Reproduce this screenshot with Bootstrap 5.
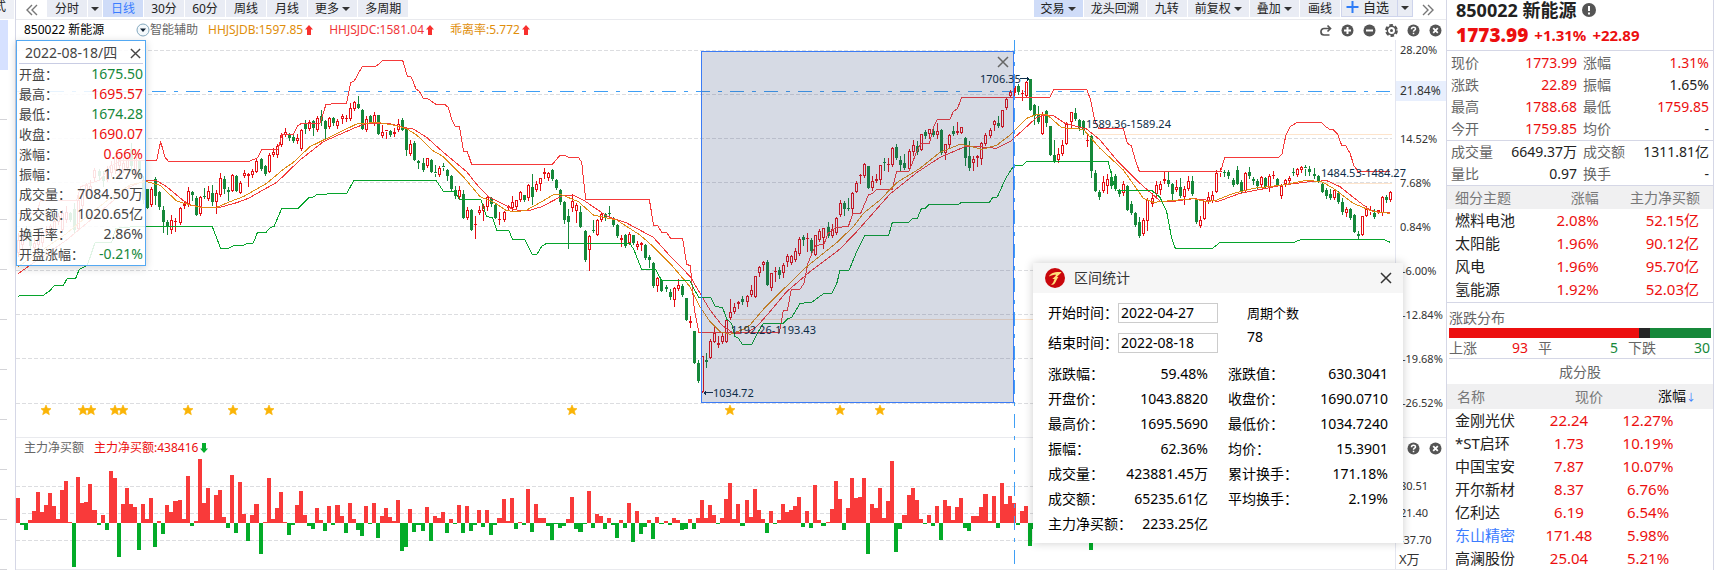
<!DOCTYPE html>
<html lang="zh-CN">
<head>
<meta charset="utf-8">
<meta name="viewport" content="width=device-width, initial-scale=1">
<title>850022 新能源</title>
<link rel="stylesheet" href="https://cdn.jsdelivr.net/npm/bootstrap@5.3.0/dist/css/bootstrap.min.css">
<style>
:root { --up:#ec0f0f; --down:#16883a; --line:#d5d7e6; --ink:#222; --dim:#666; --hot:#3b7cff; }
body { font-family:"Noto Sans","Noto Sans CJK SC",sans-serif; font-size:12px; line-height:20px; color:var(--ink); background:#fff; overflow:hidden; }
button { border:0; background:none; padding:0; color:inherit; }
svg { display:block; }
.up { color:var(--up); } .down { color:var(--down); } .dim { color:var(--dim); }
/* left strip */
.strip { width:16px; border-right:1px solid var(--line); }
.strip-tab { height:19px; line-height:14px; background:#eef0f6; width:14px; direction:rtl; padding-right:8px; }
.strip-on { width:8px; height:50px; margin-top:1px; background:#d6e1ff; }
.strip-tick { width:7px; height:50px; border-bottom:1px solid #d4d4d8; }
/* toolbar */
.tools { height:20px; border-bottom:1px solid #e9eaee; padding-left:10px; gap:1px; }
.tool { height:17px; min-width:40px; padding:0 7px; line-height:14px; background:#e9ecf4; }
.tool-on { background:#cfdcf8; }
.tool-caret { min-width:14px; padding:0 3px; }
.tool-add { border:1px solid #ced4ec; border-top:0; }
.caret { display:inline-block; border:4px solid transparent; border-top:4px solid #333; border-bottom:0; vertical-align:2px; }
.chev { width:12px; height:14px; fill:none; stroke:#777; stroke-width:1.4; }
/* charts */
.info { height:20px; padding-left:8px; }
.info-code { width:112px; }
.info-first { margin-left:10px; }
.info-item { margin-left:16px; }
.ico { width:13px; height:13px; }
.ico-set { gap:9px; }
.plot-main { height:397px; }
.plot-sub { height:111px; }
.axis { width:51px; border-left:1px solid #e4e6f0; font-size:11px; color:#333; }
.axis span { position:absolute; left:4px; transform:translateY(-50%); }
.axis .axis-neg { left:6px; }
.axis .axis-now { left:0; right:0; padding-left:4px; background:#e8effd; font-size:12px; }
.axis .axis-unit { left:3px; font-size:13px; }
.sub { border-top:1px solid #e9eaee; border-bottom:1px solid #e9eaee; }
.layer { position:absolute; top:20px; left:0; right:51px; bottom:0; pointer-events:none; }
.mark-text { position:absolute; font-size:11px; color:#0c2c48; transform:translateY(-50%); white-space:nowrap; }
.vline { position:absolute; top:0; bottom:4px; width:1px; background:repeating-linear-gradient(#3f9ff5 0 14px,transparent 14px 22px,#3f9ff5 22px 26px,transparent 26px 34px); }
.range { position:absolute; top:11px; height:352px; border:1px solid #3b7bf5; background:rgba(50,72,120,.2); }
/* day tooltip */
.tip { position:absolute; left:0; top:20px; width:130px; height:226px; padding:2px 2px 0; background:rgba(255,255,255,.88); border:1px solid #54a9f3; box-shadow:0 2px 8px rgba(0,0,0,.18); color:#444; font-size:14px; }
.tip-head { height:21px; padding:0 2px 0 6px; border-bottom:1px solid #c9cde4; }
.tip dt { font-weight:400; font-size:13px; } .tip dd { margin:0; }
/* statistics window */
.stat { position:absolute; right:43px; top:263px; width:370px; height:280px; background:#fff; box-shadow:0 0 9px rgba(0,0,0,.2); color:#000; font-size:14px; }
.stat-head { height:30px; background:#f6f6f6; padding:0 11px 0 12px; gap:9px; color:#333; }
.stat-form { padding:10px 15px 0; gap:0 29px; height:68px; }
.stat-form input { width:100px; height:20px; border:1px solid #ccc; padding:0 2px; font-size:14px; color:#000; border-radius:0; }
.stat-grid { display:grid; grid-template-columns:160px 160px; gap:0 20px; padding:0 15px; line-height:25px; }
/* quote sidebar */
.side { width:268px; border-left:1px solid var(--line); border-right:1px solid var(--line); font-size:14px; }
.side-title { height:20px; padding-left:9px; font-size:18px; gap:6px; }
.side-price { height:31px; padding-left:9px; gap:6px; font-size:15px; border-bottom:1px solid var(--line); }
.side-price b { font-size:19px; }
.kv { display:grid; grid-template-columns:126px 126px; gap:0 6px; padding:0 4px; line-height:22px; border-bottom:1px solid var(--line); }
.quote { width:100%; font-size:15px; line-height:23px; margin:0; }
.quote th { font-weight:400; font-size:14px; color:#777; background:#f0f0f1; padding:0; }
.quote td { padding:0; color:var(--up); }
.quote td:first-child { padding-left:8px; color:var(--ink); }
.quote td a { color:inherit; text-decoration:none; }
.quote td .hot { color:var(--hot); }
.spread-bar { height:10px; border-radius:0; }
.spread-row { display:grid; grid-template-columns:79px 80px 82px; gap:0 10px; height:21px; }
.spread { margin-top:1px; padding:5px 2px 0; }
</style>
</head>
<body>
<svg class="d-none" aria-hidden="true">
  <symbol id="i-redo" viewBox="0 0 13 13"><path d="M11 4.5H5a3 3 0 0 0-3 3V8a3 3 0 0 0 3 3h5.500M8.500 1.500l3 3-3 3" fill="none" stroke="#555" stroke-width="1.700"/></symbol>
  <symbol id="i-plus" viewBox="0 0 13 13"><circle cx="6.500" cy="6.500" r="6" fill="#555"/><path d="M6.500 3v7M3 6.500h7" stroke="#fff" stroke-width="2"/></symbol>
  <symbol id="i-minus" viewBox="0 0 13 13"><circle cx="6.500" cy="6.500" r="6" fill="#555"/><path d="M3 6.500h7" stroke="#fff" stroke-width="2"/></symbol>
  <symbol id="i-gear" viewBox="0 0 13 13"><circle cx="6.500" cy="6.500" r="5.200" fill="none" stroke="#555" stroke-width="2.400" stroke-dasharray="3.450 2"/><circle cx="6.500" cy="6.500" r="4.200" fill="none" stroke="#555" stroke-width="1.400"/><circle cx="6.500" cy="6.500" r="1.500" fill="#555"/></symbol>
  <symbol id="i-help" viewBox="0 0 13 13"><circle cx="6.500" cy="6.500" r="6" fill="#555"/><path d="M4.500 5.200c0-2.700 4-2.600 4-.3 0 1.400-2 1.300-2 2.800M6.500 8.800v1.500" fill="none" stroke="#fff" stroke-width="1.500"/></symbol>
  <symbol id="i-close" viewBox="0 0 13 13"><circle cx="6.500" cy="6.500" r="6" fill="#555"/><path d="M4.200 4.200l4.600 4.600M8.800 4.200L4.200 8.800" stroke="#fff" stroke-width="1.800"/></symbol>
  <symbol id="i-x" viewBox="0 0 12 12"><path d="M1 1l10 10M11 1L1 11" fill="none" stroke="currentColor" stroke-width="1.500"/></symbol>
  <symbol id="i-arrow" viewBox="0 0 8 10"><path d="M4 0l4 4.500H6V10H2V4.500H0z" fill="currentColor"/></symbol>
</svg>

<div class="d-flex">
  <aside class="strip flex-shrink-0 overflow-hidden">
    <div class="strip-tab overflow-hidden">式</div>
    <div class="strip-on"></div>
    <div class="strip-tick"></div><div class="strip-tick"></div><div class="strip-tick"></div><div class="strip-tick"></div><div class="strip-tick"></div><div class="strip-tick"></div><div class="strip-tick"></div><div class="strip-tick"></div><div class="strip-tick"></div><div class="strip-tick"></div>
  </aside>

  <main class="flex-grow-1 position-relative" style="min-width:0">
    <nav class="tools d-flex" aria-label="周期">
      <button aria-label="收起" class="me-2"><svg class="chev" viewBox="0 0 12 14"><path d="M6 2L1 7l5 5M11 2L6 7l5 5"/></svg></button>
      <button class="tool">分时</button>
      <button class="tool tool-caret" aria-label="分时选项"><i class="caret"></i></button>
      <button class="tool tool-on" style="color:var(--hot)">日线</button>
      <button class="tool">30分</button>
      <button class="tool">60分</button>
      <button class="tool">周线</button>
      <button class="tool">月线</button>
      <button class="tool text-nowrap">更多 <i class="caret"></i></button>
      <button class="tool">多周期</button>
      <button class="tool tool-on text-nowrap ms-auto">交易 <i class="caret"></i></button>
      <button class="tool">龙头回溯</button>
      <button class="tool">九转</button>
      <button class="tool text-nowrap">前复权 <i class="caret"></i></button>
      <button class="tool text-nowrap">叠加 <i class="caret"></i></button>
      <button class="tool">画线</button>
      <div class="d-flex">
        <button class="tool tool-add d-flex gap-1 px-1"><svg width="13" height="14" viewBox="0 0 13 14"><path d="M6.500 1v12M.5 7h12" stroke="#2f7cf6" stroke-width="2"/></svg><span style="font-size:13px" class="pe-1">自选</span></button>
        <button class="tool tool-caret tool-add border-start-0" aria-label="自选选项"><i class="caret"></i></button>
      </div>
      <button aria-label="展开" class="ms-2 me-2 pe-1"><svg class="chev" viewBox="0 0 12 14"><path d="M1 2l5 5-5 5M6 2l5 5-5 5"/></svg></button>
    </nav>

    <section class="position-relative">
      <div class="info d-flex align-items-center">
        <span class="info-code text-black">850022 新能源</span>
        <button aria-label="切换"><svg width="14" height="14" viewBox="0 0 14 14"><circle cx="7" cy="7" r="6" fill="#f4f9fc" stroke="#84a9bf"/><path d="M4 5.500h6L7 9z" fill="#123"/></svg></button>
        <span class="dim">智能辅助</span>
        <span class="info-first" style="color:#e08e0b">HHJSJDB:1597.85</span><svg width="8" height="10" style="color:#f8302e;margin-left:2px"><use href="#i-arrow"/></svg>
        <span class="info-item" style="color:#f0373a">HHJSJDC:1581.04</span><svg width="8" height="10" style="color:#f8302e;margin-left:2px"><use href="#i-arrow"/></svg>
        <span class="info-item" style="color:#e08e0b">乖离率:5.772</span><svg width="8" height="10" style="color:#f8302e;margin-left:2px"><use href="#i-arrow"/></svg>
        <div class="ico-set d-flex ms-auto pe-1">
          <button aria-label="重做"><svg class="ico"><use href="#i-redo"/></svg></button>
          <button aria-label="放大"><svg class="ico"><use href="#i-plus"/></svg></button>
          <button aria-label="缩小"><svg class="ico"><use href="#i-minus"/></svg></button>
          <button aria-label="设置"><svg class="ico"><use href="#i-gear"/></svg></button>
          <button aria-label="帮助"><svg class="ico"><use href="#i-help"/></svg></button>
          <button aria-label="关闭"><svg class="ico"><use href="#i-close"/></svg></button>
        </div>
      </div>

      <div class="d-flex plot-main">
        <svg id="main" class="flex-grow-1 h-100" style="width:0" viewBox="48 120 4137 1191" preserveAspectRatio="none" role="img" aria-label="日线图"></svg>
        <div class="axis position-relative" id="axisMain"></div>
      </div>

      <div class="sub">
        <div class="info d-flex align-items-center">
          <span class="dim ms-0">主力净买额</span>
          <span class="up" style="margin-left:10px">主力净买额:438416</span>
          <svg width="8" height="10" style="color:#05ad2d;margin-left:2px;transform:rotate(180deg)"><use href="#i-arrow"/></svg>
          <div class="ico-set d-flex ms-auto pe-1">
            <button aria-label="帮助"><svg class="ico"><use href="#i-help"/></svg></button>
            <button aria-label="关闭"><svg class="ico"><use href="#i-close"/></svg></button>
          </div>
        </div>
        <div class="d-flex plot-sub">
          <svg id="sub" class="flex-grow-1 h-100" style="width:0" viewBox="48 1374 4137 333" preserveAspectRatio="none" role="img" aria-label="主力净买额图"></svg>
          <div class="axis position-relative" id="axisSub"></div>
        </div>
      </div>

      <div class="layer" id="layer"></div>

      <div class="tip">
        <div class="tip-head d-flex align-items-center justify-content-between"><span>2022-08-18/四</span><button aria-label="关闭"><svg width="11" height="11"><use href="#i-x"/></svg></button></div>
        <dl class="m-0" id="tip"></dl>
      </div>
    </section>

    <div class="stat" role="dialog" aria-label="区间统计">
      <div class="stat-head d-flex align-items-center">
        <svg width="20" height="20" viewBox="0 0 20 20"><circle cx="10" cy="10" r="10" fill="#c9070c"/><path d="M4 8.500C5 5.500 9 3.500 16.500 4c-.8 1.800-3.500 3.200-4.600 5l1.600.2c-1.800 1.300-2 4-3.800 6.300-1.200 1.400-2.700 1.600-3.600.9 2.200-.6 2.500-3.500 3.500-5.400L7.300 11c1.500-1.500 3-2.600 3.800-4.300C8.500 6.700 6 7.200 4 8.500z" fill="#ffe27a"/></svg>
        <span>区间统计</span>
        <button class="ms-auto" aria-label="关闭"><svg width="12" height="12"><use href="#i-x"/></svg></button>
      </div>
      <div class="stat-form d-flex">
        <div class="d-flex flex-column" style="gap:10px">
          <div class="d-flex"><label for="from">开始时间：</label><input id="from" value="2022-04-27"></div>
          <div class="d-flex"><label for="to">结束时间：</label><input id="to" value="2022-08-18"></div>
        </div>
        <div class="d-flex flex-column" style="gap:4px"><span style="font-size:13px">周期个数</span><span>78</span></div>
      </div>
      <div class="stat-grid" id="stat"></div>
    </div>
  </main>

  <aside class="side flex-shrink-0">
    <div class="side-title d-flex align-items-center fw-bold"><span>850022 新能源</span><svg width="14" height="14" viewBox="0 0 14 14"><circle cx="7" cy="7" r="7" fill="#555"/><path d="M7 3v5M7 9.500v2" stroke="#fff" stroke-width="2"/></svg></div>
    <div class="side-price d-flex align-items-center fw-bold up"><b>1773.99</b><span>+1.31%</span><span>+22.89</span></div>
    <div class="kv" id="kv1" style="padding-top:1px"></div>
    <div class="kv" id="kv2"></div>
    <table class="quote">
      <thead><tr><th style="padding-left:8px">细分主题</th><th class="text-end">涨幅</th><th class="text-end" style="padding-right:13px">主力净买额</th></tr></thead>
      <tbody id="themes"></tbody>
    </table>
    <div class="spread" style="border-top:1px solid var(--line)">
      <div class="dim" style="height:20px">涨跌分布</div>
      <div class="progress spread-bar" id="bar"></div>
      <div class="spread-row" style="border-bottom:1px solid var(--line)">
        <div class="d-flex justify-content-between dim"><span>上涨</span><span class="up">93</span></div>
        <div class="d-flex justify-content-between dim"><span>平</span><span class="down">5</span></div>
        <div class="d-flex justify-content-between dim"><span>下跌</span><span class="down">30</span></div>
      </div>
    </div>
    <div class="text-center dim" style="line-height:25px">成分股</div>
    <table class="quote">
      <thead><tr style="height:24px"><th style="padding-left:10px;width:84px">名称</th><th class="text-center" style="padding-left:40px">现价</th><th style="padding-left:51px;color:#111;width:106px">涨幅<span style="color:var(--hot);font-size:10px">↓</span></th></tr></thead>
      <tbody id="stocks"></tbody>
    </table>
  </aside>
</div>

<script src="https://cdn.jsdelivr.net/npm/bootstrap@5.3.0/dist/js/bootstrap.bundle.min.js"></script>
<script>
/* One chart unit is a third of a pixel; a period is 12.15 units wide. */
const STEP = 12.15, X0 = 54;
const $ = id => document.getElementById(id);
const snap = v => Math.floor(v / 3) * 3;
const xAt = i => snap(X0 + i * STEP);

/* top, bottom, high, low of every period; R rises, G falls */
const candles = `R720,760,700,770 R700,735,690,745 G690,700,680,720 G693,740,690,756 R730,745,715,750 R715,735,700,745 R700,730,690,740 R690,700,680,705 R680,695,672,700 R665,690,655,695 R650,668,640,672 R640,690,632,695 R636,660,620,668 G640,660,636,664 G628,690,610,698 R600,688,590,692 R580,620,575,628 R556,590,550,594 R560,570,540,580 R512,535,506,540 G515,530,508,538 G528,545,515,560 R510,540,500,544 R495,520,484,528 R470,510,460,520 R478,500,470,532 R490,512,476,518 R478,506,466,512 G448,500,430,512 R472,530,466,536 G482,532,478,536 G540,600,530,610
G567,626 R567,617,563,620 G538,588,532,612 G578,622,573,628 G630,666,618,698 G666,680,660,704 R660,690,647,701 R665,667,655,693 R626,670,622,672 R614,620,605,624 R574,615,562,620 G577,587,573,602 G594,647,590,647 R592,644,588,646 G588,592,566,596 R573,597,558,602 G579,606,556,615 R580,606,572,641
R536,587,521,590 G537,569,530,580 G570,577,562,600 R527,574,522,575 G528,575,525,575 R550,580,545,580 R519,528,510,532 R524,530,520,560 R515,525,508,532 R483,516,478,518 G478,507,476,510 G500,522,495,525 R466,516,460,518 R457,465,445,470 R440,465,432,472 R405,437,400,440 R396,406,384,410 G405,416,400,420 G412,423,405,426 R414,423,404,430
R392,449,388,450 G374,389,362,400 R366,388,362,390 G363,386,360,405 R356,392,350,395 G350,364,330,376 G363,389,360,422 R356,383,353,386 G355,370,353,375 R365,380,358,385 R350,358,344,370 R354,356,347,363 R325,358,310,360 R307,328,305,330 G312,324,290,326 G331,387,328,388 R358,392,350,395 G350,366,345,368 R345,370,338,375 G345,404
R396,410,375,412 R392,396,392,416 G394,405,392,408 R396,404,385,408 R374,390,357,393 G362,390,356,392 G387,450,383,465 R433,463,420,465 G430,480,425,482 G484,490,480,504 G489,512,475,514 R475,500,474,502 G480,516,478,518 G518,522,495,530 R504,527,500,528 G500,504,490,512 G510,530,508,542 G528,568,525,572 G570,590,560,594 R572,592,558,594
G582,654,570,655 R632,654,622,658 G632,690,628,690 R672,674,648,716 R630,640,620,644 R620,634,612,662 R592,622,590,632 G595,612,592,620 G616,654,612,655 R658,660,637,672 R638,660,635,665 R618,626,615,630 R606,626,588,630 R602,622,600,625 R577,602,575,604 G587,600,585,605 R556,596,552,600 G562,591,524,614 R553,570,545,573 R536,553,534,570
R518,524,504,535 R520,535,516,540 G510,537,507,540 G542,564,537,567 G570,608,567,614 G606,662,603,670 G650,668,627,745 R603,625,582,635 R615,635,610,668 G636,681,620,682 G693,782,690,784 R710,752,705,812 G690,694,660,698 R661,705,657,707 R643,660,640,664 G643,655,640,662 G640,644,620,650 G656,676,653,680 G676,710,672,712 R715,722,705,738
G706,740,702,743 R702,730,698,732 G705,730,705,733 R733,743,725,748 R731,736,728,750 G737,776,733,778 G772,782,765,803 G790,858,788,862 R835,860,832,875 G842,874 G861,869,855,875 G876,891,867,898 R866,902,862,918 R855,869,837,872 G858,886,852,890 G894,962 R963,970,948,982 G993,1090 G1089,1145,1080,1146 R1069,1177
G1080,1088,1060,1102 R1024,1075,1018,1076 R999,1028,983,1028 R1030,1037,1008,1042 R1008,1028,1000,1030 R961,1028 R938,956,897,958 R922,936,910,940 R907,914,905,924 G898,908,888,912 R889,908,885,920 R871,886,856,890 R829,892 R802,820,798,830 R788,796,785,812 G787,857,780,857 R821,866,820,870 R813,816,803,845 G810,825,801,835 R796,820,790,832
R770,788,764,800 R770,790,766,792 R754,781,745,783 R718,762,713,765 G711,722,705,735 R715,717,700,755 G720,755,716,756 R706,766 R694,722,688,724 R686,716,684,745 G682,708,668,712 R688,708,672,712 R656,700,652,702 R610,646,600,648 G609,627,605,645 G626,629,595,632 R580,628,578,640 R550,576,545,578 R526,530,524,550 R492,530,489,532
G499,566 R545,565,530,570 R538,545,522,547 R496,542,495,552 G487,490,474,512 R493,496,476,515 R446,495,443,500 G441,475,434,477 G481,495,470,510 G490,506,463,508 R454,508,448,510 R436,456,420,465 G440,458,425,462 R402,450 G396,410,390,416 R389,402,388,416 G393,406,384,410 R393,405,370,415 G390,459,388,462 R434,460,432,478
R406,436,402,443 G394,403,380,406 R394,400,366,402 R382,401 G414,476,412,495 G468,506,425,512 R478,491,470,512 R469,476,465,500 R430,478,428,492 R406,433,400,435 R390,409,386,412 R364,376,360,390 G370,380,350,382 R331,382 R298,325,292,328 R276,290,270,292 R258,280,250,290 G258,278,252,282 R280,282,270,302 R247,290,245,292
G238,330 G316,350,312,374 G345,366,318,370 R344,404,338,404 G334,370,330,380 G378,467 G466,485,422,486 R462,480,446,487 R436,464,422,466 R374,432,366,433 R338,368,337,385 G340,357,324,360 G360,384,357,392 G365,392,362,402 R420,424,405,440 G408,513,405,533 G519,573,510,575 G577,592,570,599 R546,575,530,577 R538,558,524,580
G533,558,515,565 G530,569,524,572 G572,582,568,590 R552,580,545,586 G558,630,555,632 G612,640,605,642 G640,675,636,678 G668,710,653,712 R660,704,655,706 R600,665,596,690 R596,614,580,618 R556,584,545,588 R554,570,544,584 R537,545,515,550 G542,554,518,560 G552,582,550,600 R561,571,540,573 G561,590,536,592 R569,592,558,612 R544,568,528,572
G545,584,530,586 G600,668,597,670 R660,680,650,682 R605,658 R591,606,576,610 R585,604,575,607 R520,577,512,578 R515,519,505,530 G517,519,510,530 G518,530,512,535 G540,555,534,558 G510,552,500,554 G546,574,540,576 R520,573,516,573 G518,530,503,535 G538,544,532,552 G545,558,538,564 R533,556,530,558 G535,563,533,565 R528,562,522,575
R526,528,515,535 G537,558,535,560 R558,590,552,595 R542,553,537,558 R535,545,528,548 G516,520,505,525 R508,527,504,530 R503,510,500,518 G503,507,497,525 G508,518,498,526 G522,530,505,534 G530,545,525,548 G552,576,550,578 G570,590,564,594 G582,594,568,598 R570,596,567,598 G580,606,575,610 G607,638,595,644 R628,640,622,650 G628,655,625,658
G645,698,642,698 G703,708,695,716 R650,706 R628,650,620,650 R632,636,620,642 G640,653,627,655 R630,640 R592,640,588,645 G593,602,585,608 R577,600,573,603`.split(/\s+/);

const lines = {
  '#f53a3a': [
    '54,640 110,640 122,600 230,600 242,560 300,540 330,500 360,482 438,482 470,482 482,424 494,470 505,484 748,484 773,473 785,448 834,448 846,403 880,403 893,378 905,370 960,370 978,313 1040,309 1052,248 1062,244 1087,199 1130,198 1148,181 1208,181 1222,229 1234,231 1248,267 1258,274 1270,295 1285,297 1308,313 1335,314 1345,322 1355,358 1366,379 1378,379 1391,455 1402,455 1415,493 1657,493 1680,466 1693,466 1705,472 1735,472 1745,486 1757,598 1948,598 1961,677 1973,677 1985,697 2000,697 2012,715 2048,715 2060,794 2071,796 2083,928 2097,998 2338,998 2350,932 2362,932 2374,868 2400,868 2412,850 2424,790 2436,760 2448,736 2472,733 2484,700 2508,682 2545,680 2558,641 2582,640 2606,583 2618,581 2630,568 2677,568 2690,514 2727,514 2752,450 2764,430 2788,430 2800,382 2812,358 2850,358 2860,334 2872,327 2885,292 3150,292 3162,268 3260,268 3272,300 3284,360 3296,386 3370,386 3382,430 3394,437 3406,480 3418,514 3662,514 3674,472 3835,472 3846,463 3858,404 3870,380 3892,367 3965,367 3977,380 3989,388 4001,390 4013,402 4025,436 4038,438 4050,460 4062,497 4074,514 4171,514',
    '54,821 120,775 200,720 260,670 330,610 390,560 438,541 470,542 500,560 550,602 570,615 610,622 660,622 710,608 745,595 830,547 845,533 900,480 970,425 1065,383 1100,370 1165,370 1210,382 1240,387 1280,412 1330,457 1400,515 1430,553 1465,590 1510,612 1540,629 1560,631 1590,631 1625,620 1690,586 1720,586 1750,600 1820,648 1880,669 1960,712 2010,768 2071,830 2100,880 2130,930 2165,975 2200,1000 2240,998 2270,980 2310,935 2360,875 2430,815 2520,747 2570,695 2670,582 2750,518 2820,472 2900,438 2940,440 2990,445 3030,425 3080,380 3110,352 3130,346 3160,347 3195,370 3260,387 3300,420 3350,480 3420,550 3480,603 3520,604 3580,596 3655,604 3720,580 3850,555 3930,545 3980,542 4020,560 4070,600 4110,630 4140,637 4171,637'],
  '#e08a14': ['54,800 120,755 200,700 260,650 330,595 390,555 438,544 480,556 530,603 560,612 600,622 650,622 690,605 730,590 800,550 850,508 880,487 930,440 975,418 1070,372 1130,367 1180,375 1220,386 1250,405 1300,453 1330,470 1390,530 1440,590 1480,606 1520,632 1550,635 1580,630 1625,605 1660,584 1680,582 1735,605 1780,645 1850,660 1920,705 1960,740 2010,790 2070,860 2100,920 2130,965 2160,995 2190,1003 2230,988 2250,975 2290,928 2350,868 2420,800 2510,728 2560,680 2590,640 2640,600 2690,548 2760,505 2820,457 2880,433 2910,438 2945,448 2990,436 3030,405 3080,355 3110,343 3140,343 3185,383 3250,388 3300,445 3370,510 3430,595 3460,607 3500,603 3580,596 3620,605 3650,600 3700,580 3760,565 3850,555 3920,541 3965,545 4000,565 4060,610 4120,635 4171,640'],
  '#06a42c': ['54,889 65,886 130,886 150,872 163,856 190,856 202,835 227,835 238,808 262,796 285,728 335,728 347,685 400,680 637,680 662,745 686,745 700,737 728,737 740,731 760,729 772,698 798,697 812,682 822,680 845,626 893,626 927,593 940,591 952,583 1040,580 1062,541 1308,541 1330,574 1365,574 1378,598 1442,598 1460,650 1478,653 1490,691 1526,691 1538,718 1574,718 1597,764 1610,764 1625,739 1640,730 1890,730 1902,750 1925,808 1967,808 1985,842 2070,842 2085,873 2097,892 2132,892 2145,919 2168,923 2180,957 2195,970 2205,1010 2215,1015 2227,1033 2255,1033 2275,995 2290,970 2350,970 2363,956 2375,953 2400,910 2435,907 2472,880 2496,880 2510,852 2520,811 2547,811 2568,760 2595,706 2666,706 2677,667 2726,667 2738,656 2752,655 2764,626 2776,625 2788,613 2875,613 2885,607 2968,607 2978,593 2992,591 3017,535 3042,496 3068,496 3080,484 3324,484 3346,570 3455,571 3480,592 3500,635 3515,715 3526,745 3638,745 3660,727 3882,727 3905,718 4150,718 4171,727']
};

/* net main-force buying per period, as bar heights */
const flow = [75,-6,-21,9,36,93,33,54,90,51,12,99,126,3,-131,138,60,63,117,39,-6,24,-21,156,135,-101,57,105,57,48,-80,57,12,75,-71,6,-32,54,33,66,69,12,141,-8,6,192,60,105,9,84,99,18,-14,144,-30,123,27,-53,24,57,-92,3,135,12,45,93,3,-35,-5,54,96,24,-8,-17,45,9,-23,51,-5,54,21,-30,60,12,-20,-38,51,-2,60,-44,21,45,18,6,69,-83,-71,42,-26,-5,-23,48,-53,21,15,33,-30,12,-2,54,-30,51,-23,-5,39,-11,39,-35,-5,15,72,6,75,-17,3,-5,102,-26,57,15,15,-8,-50,-2,-14,-8,12,78,-17,-26,-2,96,-14,27,21,-17,15,-5,-44,9,-14,60,-56,36,-32,-11,9,-47,18,-2,6,-5,15,9,-20,-17,12,-17,15,69,15,54,24,-2,15,72,120,12,57,-8,69,18,102,39,12,-30,36,-2,9,57,33,39,51,78,-11,36,-14,114,9,-8,3,42,126,72,-20,45,135,75,78,135,-92,57,45,105,15,66,186,-86,-17,24,84,105,69,12,-2,24,-8,51,-50,69,51,9,48,75,-14,-23,21,21,48,87,6,81,-14,120,57,81,60,-5,36,51,-68,-17,24,12,-8,30,15,-12,42,21,18,-6,9,27,-14,-82,20,15];

const grid = ys => ys.map(y => `<path d="M48 ${snap(y) + 1.5}H4176" stroke="#dcdde0" stroke-width="3" stroke-dasharray="12 6"/>`).join('');
let s = grid([151,283,415,547,679,811,943,1075,1210]);
s += '<path d="M2190 958.500H4176M3270 403.500H4176M3960 550.500H4176" stroke="#fde4cc" stroke-width="3"/>';
s += '<path d="M48 274.500H4176" stroke="#3f9ff5" stroke-width="3" stroke-dasharray="42 24 12 24"/>';
candles.forEach((c, i) => {
  const red = c[0] === 'R', [t, b, h = t, l = b] = c.slice(1).split(',').map(Number);
  const x = xAt(i), top = snap(t), bot = Math.max(snap(b), top + 3), col = red ? '#e60f14' : '#16883a';
  s += `<path d="M${x + 1.5} ${snap(h)}V${top}M${x + 1.5} ${bot}V${snap(l) + 3}" stroke="${col}" stroke-width="3"/>`;
  if (b - t < 5) s += `<rect x="${x - 3}" y="${top}" width="9" height="3" fill="${col}"/>`;
  else if (red && i !== 246) s += `<rect x="${x - 1.5}" y="${top + 1.5}" width="6" height="${Math.max(bot - top - 3, 3)}" fill="#fff" stroke="${col}" stroke-width="3"/>`;
  else s += `<rect x="${x - 3}" y="${top}" width="9" height="${bot - top}" fill="${col}"/>`;
});
for (const [col, set] of Object.entries(lines))
  set.forEach(p => s += `<polyline points="${p}" fill="none" stroke="${col}" stroke-width="3"/>`);
s += '<path d="M2112 1178H2140M2112 1178l6-5M2112 1178l6 5M3060 236H3087M3087 236l-6-5M3087 236l-6 5" stroke="#0c2c48" stroke-width="3" fill="none"/>';
const stars = [46,83,91,115,123,188,233,269,572,730,840,880];
const starPath = 'l4 10 11 1-8 7 3 11-10-6-10 6 3-11-8-7 11-1z';
$('main').innerHTML = `<g shape-rendering="crispEdges">${s}</g>` + stars.map(x => `<path d="M${x * 3} 1215${starPath}" fill="#fab406" stroke="#fab406" stroke-width="2"/>`).join('');

s = grid([1459,1540,1621]);
flow.forEach((v, i) => {
  const x = snap(48 + i * STEP), w = snap(48 + (i + 1) * STEP) - x, h = Math.max(3, Math.round(Math.abs(v) / 3) * 3);
  s += `<rect x="${x}" y="${v > 0 ? 1569 - h : 1569}" width="${w}" height="${h}" fill="${v > 0 ? '#f93a3a' : '#03ab28'}"/>`;
});
$('sub').innerHTML = `<g shape-rendering="crispEdges">${s}</g>`;

/* overlays that follow the plot width */
const pct = x => ((x * 3 - 48) / 4137 * 100).toFixed(3) + '%';
const marks = [[980,79,'1706.35'],[713,393,'1034.72'],[731,330,'1192.26-1193.43'],[1086,124,'1589.36-1589.24'],[1321,173,'1484.53-1484.27']];
$('layer').innerHTML =
  `<div class="range" style="left:${pct(701)};width:${(313 / 1379 * 100).toFixed(3)}%"><svg class="position-absolute end-0 me-1 mt-1" style="color:#666" width="12" height="12"><use href="#i-x"/></svg></div>` +
  `<div class="vline" style="left:${pct(1014)}"></div>` +
  marks.map(([x, y, t]) => `<span class="mark-text" style="left:${pct(x)};top:${y - 40}px">${t}</span>`).join('');

$('axisMain').innerHTML = [[50,'28.20%'],[139,'14.52%'],[183,'7.68%'],[227,'0.84%'],[271,'-6.00%'],[315,'-12.84%'],[359,'-19.68%'],[403,'-26.52%']]
  .map(([y, t]) => `<span class="${t[0] === '-' ? 'axis-neg' : ''}" style="top:${y - 40}px">${t}</span>`).join('') + '<span class="axis-now" style="top:51px">21.84%</span>';
$('axisSub').innerHTML = [[486,'80.51'],[513,'21.40'],[540,'-37.70'],[559,'X万']]
  .map(([y, t]) => `<span class="${t === 'X万' ? 'axis-unit' : ''}" style="top:${y - 458}px">${t}</span>`).join('');

/* text panels */
const cls = c => c === 'u' ? 'up' : c === 'd' ? 'down' : '';
$('tip').innerHTML = [['开盘','1675.50','d'],['最高','1695.57','u'],['最低','1674.28','d'],['收盘','1690.07','u'],['涨幅','0.66%','u'],['振幅','1.27%'],['成交量','7084.50万'],['成交额','1020.65亿'],['换手率','2.86%'],['开盘涨幅','-0.21%','d']]
  .map(([k, v, c]) => `<div class="d-flex justify-content-between"><dt>${k}：</dt><dd class="${cls(c)}">${v}</dd></div>`).join('');
$('stat').innerHTML = [['涨跌幅','59.48%'],['涨跌值','630.3041'],['开盘价','1043.8820'],['收盘价','1690.0710'],['最高价','1695.5690'],['最低价','1034.7240'],['振幅','62.36%'],['均价','15.3901'],['成交量','423881.45万'],['累计换手','171.18%'],['成交额','65235.61亿'],['平均换手','2.19%'],['主力净买额','2233.25亿']]
  .map(([k, v]) => `<div class="d-flex justify-content-between"><span>${k}：</span><span>${v}</span></div>`).join('');
const kv = rows => rows.map(([k, v, c]) => `<div class="d-flex justify-content-between"><span class="dim">${k}</span><span class="${cls(c)}">${v}</span></div>`).join('');
$('kv1').innerHTML = kv([['现价','1773.99','u'],['涨幅','1.31%','u'],['涨跌','22.89','u'],['振幅','1.65%'],['最高','1788.68','u'],['最低','1759.85','u'],['今开','1759.85','u'],['均价','-']]);
$('kv2').innerHTML = kv([['成交量','6649.37万'],['成交额','1311.81亿'],['量比','0.97'],['换手','-']]);
$('themes').innerHTML = [['燃料电池','2.08%','52.15亿'],['太阳能','1.96%','90.12亿'],['风电','1.96%','95.70亿'],['氢能源','1.92%','52.03亿']]
  .map(r => `<tr><td>${r[0]}</td><td class="text-end">${r[1]}</td><td class="text-end" style="padding-right:14px">${r[2]}</td></tr>`).join('');
$('stocks').innerHTML = [['金刚光伏','22.24','12.27%'],['*ST启环','1.73','10.19%'],['中国宝安','7.87','10.07%'],['开尔新材','8.37','6.76%'],['亿利达','6.19','6.54%'],['东山精密','171.48','5.98%',1],['高澜股份','25.04','5.21%']]
  .map(r => `<tr><td><a href="#" class="${r[3] ? 'hot' : ''}">${r[0]}</a></td><td class="text-center">${r[1]}</td><td class="text-center pe-4">${r[2]}</td></tr>`).join('');
$('bar').innerHTML = [[93,'#ec0f0f'],[5,'#262626'],[30,'#16883a']]
  .map(([n, c]) => `<div class="progress-bar" style="width:${n / 1.28}%;background:${c}"></div>`).join('');
</script>
</body>
</html>
